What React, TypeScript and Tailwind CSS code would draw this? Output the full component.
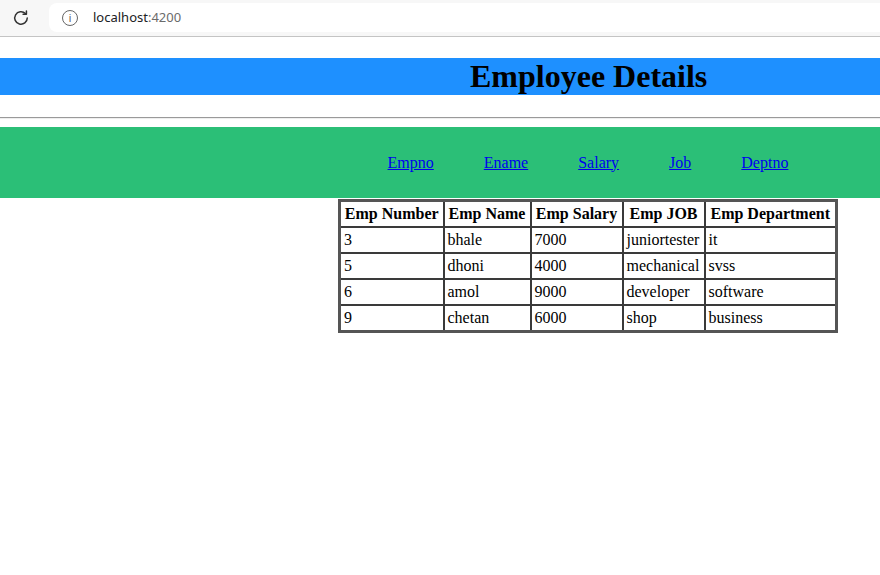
import React from "react";

const rows = [
  ["3", "bhale", "7000", "juniortester", "it"],
  ["5", "dhoni", "4000", "mechanical", "svss"],
  ["6", "amol", "9000", "developer", "software"],
  ["9", "chetan", "6000", "shop", "business"],
];

const heads = ["Emp Number", "Emp Name", "Emp Salary", "Emp JOB", "Emp Department"];
const widths = ["w-[104px]", "w-[87px]", "w-[92px]", "w-[82px]", "w-[132px]"];

export default function App() {
  return (
    <div className="w-[880px] h-[575px] bg-white overflow-hidden" style={{ fontFamily: '"Liberation Serif", serif' }}>
      {/* browser chrome */}
      <div className="h-[37px] bg-[#f7f7f7] border-b border-[#c4c4c4] flex items-center relative">
        <div className="w-[42px] flex justify-center">
          <svg width="20" height="20" viewBox="0 0 24 24" fill="none" stroke="#333" strokeWidth="1.8" strokeLinecap="round" strokeLinejoin="round">
            <path d="M19.5 12a7.5 7.5 0 1 1-2.2-5.3" />
            <path d="M18.5 3.5v4h-4" />
          </svg>
        </div>
        <div className="absolute left-[49px] top-[3px] right-0 h-[29px] bg-white rounded-l-[8px] flex items-center" style={{ fontFamily: '"Noto Sans", sans-serif' }}>
          <div className="ml-[13px] w-[16px] h-[16px] rounded-full border border-[#666] flex items-center justify-center text-[10px] text-[#555] leading-none">i</div>
          <span className="ml-[15px] text-[13px] text-[#202124]">localhost</span>
          <span className="text-[13px] text-[#6b6b6b]">:4200</span>
        </div>
      </div>

      {/* heading */}
      <div className="mt-[21px] h-[37px] bg-[#1e90ff] flex items-center">
        <h1 className="pl-[470px] text-[32px] font-bold text-black leading-[37px]">Employee Details</h1>
      </div>

      <div className="mt-[22px] h-[2px] border-t border-t-[#9a9a9a] border-b border-b-[#eeeeee]" />

      {/* nav */}
      <div className="mt-[8px] h-[71px] bg-[#2bbf77] flex items-center justify-center pl-[296px] gap-[50px] text-[16px]">
        {["Empno", "Ename", "Salary", "Job", "Deptno"].map((l) => (
          <a key={l} href="#" className="text-[#0000ee] underline">{l}</a>
        ))}
      </div>

      {/* table */}
      <div className="mt-[1px] pl-[338px]">
        <table className="border-collapse border-[3px] border-[#555] text-[16px] text-black">
          <thead>
            <tr>
              {heads.map((h, i) => (
                <th key={h} className={`${widths[i]} border-2 border-[#3a3a3a] px-[2px] py-[3px] leading-[18px] font-bold text-center whitespace-nowrap`}>{h}</th>
              ))}
            </tr>
          </thead>
          <tbody>
            {rows.map((r) => (
              <tr key={r[0]}>
                {r.map((c, i) => (
                  <td key={i} className="border-2 border-[#3a3a3a] pl-[3px] pr-[1px] py-[3px] leading-[18px] text-left whitespace-nowrap">{c}</td>
                ))}
              </tr>
            ))}
          </tbody>
        </table>
      </div>
    </div>
  );
}
